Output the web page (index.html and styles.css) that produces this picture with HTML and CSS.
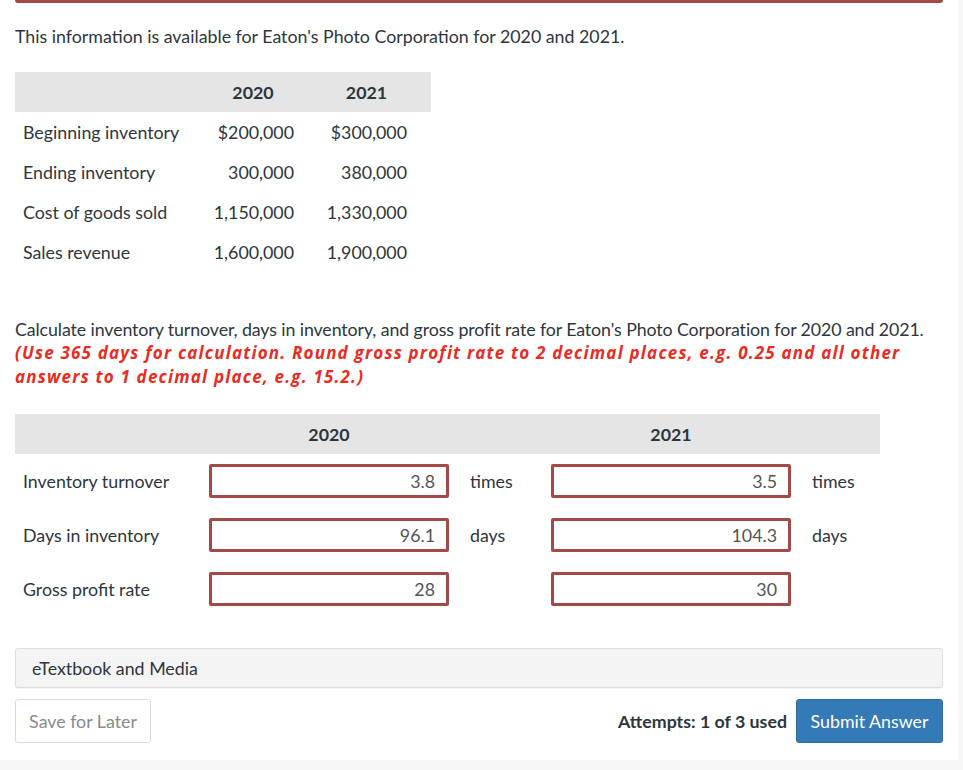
FILE: index.html
```html
<!DOCTYPE html>
<html lang="en">

<head>
    <meta charset="UTF-8">
    <meta name="viewport" content="width=device-width, initial-scale=1.0">
    <title>Inventory turnover</title>

    <link rel="stylesheet" href="styles.css">
</head>

<body>
    <div class="card">
        <div class="top-bar"></div>

        <p class="intro">This information is available for Eaton's Photo Corporation for 2020 and 2021.</p>

        <table class="data">
            <thead>
                <tr>
                    <th class="label-col"></th>
                    <th class="y1">2020</th>
                    <th class="y2">2021</th>
                </tr>
            </thead>
            <tbody>
                <tr>
                    <td>Beginning inventory</td>
                    <td class="num">$200,000</td>
                    <td class="num y2">$300,000</td>
                </tr>
                <tr>
                    <td>Ending inventory</td>
                    <td class="num">300,000</td>
                    <td class="num y2">380,000</td>
                </tr>
                <tr>
                    <td>Cost of goods sold</td>
                    <td class="num">1,150,000</td>
                    <td class="num y2">1,330,000</td>
                </tr>
                <tr>
                    <td>Sales revenue</td>
                    <td class="num">1,600,000</td>
                    <td class="num y2">1,900,000</td>
                </tr>
            </tbody>
        </table>

        <div class="question">
            <span class="ask">Calculate inventory turnover, days in inventory, and gross profit rate for Eaton's Photo Corporation for 2020 and 2021.</span>
            <span class="hint">(Use 365 days for calculation. Round gross profit rate to 2 decimal places, e.g. 0.25 and all other answers to 1 decimal place, e.g. 15.2.)</span>
        </div>

        <div class="answers">
            <div class="head"></div>
            <div class="head">2020</div>
            <div class="head"></div>
            <div class="head">2021</div>
            <div class="head"></div>

            <div class="label">Inventory turnover</div>
            <div class="field"><input type="text" value="3.8"></div>
            <div class="unit">times</div>
            <div class="field"><input type="text" value="3.5"></div>
            <div class="unit">times</div>

            <div class="label">Days in inventory</div>
            <div class="field"><input type="text" value="96.1"></div>
            <div class="unit">days</div>
            <div class="field"><input type="text" value="104.3"></div>
            <div class="unit">days</div>

            <div class="label">Gross profit rate</div>
            <div class="field"><input type="text" value="28"></div>
            <div class="unit"></div>
            <div class="field"><input type="text" value="30"></div>
            <div class="unit"></div>
        </div>

        <div class="media">eTextbook and Media</div>

        <div class="actions">
            <button class="save">Save for Later</button>
            <div class="right">
                <span class="attempts">Attempts: 1 of 3 used</span>
                <button class="submit">Submit Answer</button>
            </div>
        </div>
    </div>
</body>

</html>
```

FILE: styles.css
```css
* {
    margin: 0;
    padding: 0;
    box-sizing: border-box;
}

body {
    background: #f7f7f7;
    font-family: Lato, "Liberation Sans", sans-serif;
    font-size: 17.8px;
    color: #2e363d;
}

.card {
    width: 958px;
    height: 760px;
    background: #fff;
    padding: 0 15px;
}

.top-bar {
    height: 3px;
    background: #a34a46;
    border-radius: 0 0 3px 3px;
}

.intro {
    margin-top: 21px;
    line-height: 24px;
}

/* first table */
.data {
    margin-top: 24px;
    border-collapse: collapse;
}

.data th {
    height: 40px;
    background: #e5e5e5;
    font-weight: bold;
    text-align: center;
}

.data td {
    height: 40px;
    padding-left: 8px;
}

.data .label-col {
    width: 189px;
}

.data .y1 {
    width: 98px;
}

.data .y2 {
    width: 129px;
}

.data td.num {
    text-align: right;
    padding-right: 8px;
}

.data td.num.y2 {
    padding-right: 24px;
}

.question {
    margin-top: 45px;
    line-height: 24px;
}

.ask {
    display: block;
    white-space: nowrap;
    letter-spacing: -0.1px;
}

.hint {
    display: block;
    color: #ea2b1f;
    font-family: "Open Sans", "Liberation Sans", sans-serif;
    font-size: 17px;
    font-weight: bold;
    font-style: italic;
    letter-spacing: 1.2px;
}

/* answers grid */
.answers {
    margin-top: 25px;
    display: grid;
    grid-template-columns: 194px 240px 102px 240px 89px;
    row-gap: 20px;
    width: 865px;
}

.answers .head {
    height: 40px;
    line-height: 40px;
    background: #e5e5e5;
    font-weight: bold;
    text-align: center;
    margin-bottom: -10px;
}

.answers .label {
    padding-left: 8px;
    line-height: 34px;
}

.answers .unit {
    padding-left: 21px;
    line-height: 34px;
}

.field input {
    width: 240px;
    height: 34px;
    border: 3px solid #a34a46;
    border-radius: 2px;
    font-family: Lato, "Liberation Sans", sans-serif;
    font-size: 17.8px;
    color: #555;
    text-align: right;
    padding-right: 11px;
    outline: none;
}

.media {
    margin-top: 42px;
    height: 40px;
    line-height: 38px;
    padding-left: 16px;
    background: #f4f4f4;
    border: 1px solid #dddddd;
    border-radius: 3px;
    box-shadow: 0 1px 1px rgba(0, 0, 0, 0.05);
}

.actions {
    margin-top: 11px;
    display: flex;
    justify-content: space-between;
    align-items: center;
}

.actions .right {
    display: flex;
    align-items: center;
    gap: 9px;
}

button {
    height: 44px;
    font-family: Lato, "Liberation Sans", sans-serif;
    font-size: 17.8px;
    border-radius: 3px;
    cursor: pointer;
}

.save {
    width: 136px;
    background: #fff;
    color: #8a8a8a;
    border: 1px solid #dcdcdc;
}

.attempts {
    font-weight: bold;
    color: #2e363d;
}

.submit {
    width: 147px;
    background: #337ab7;
    color: #fff;
    border: 1px solid #2e6da4;
}
```
